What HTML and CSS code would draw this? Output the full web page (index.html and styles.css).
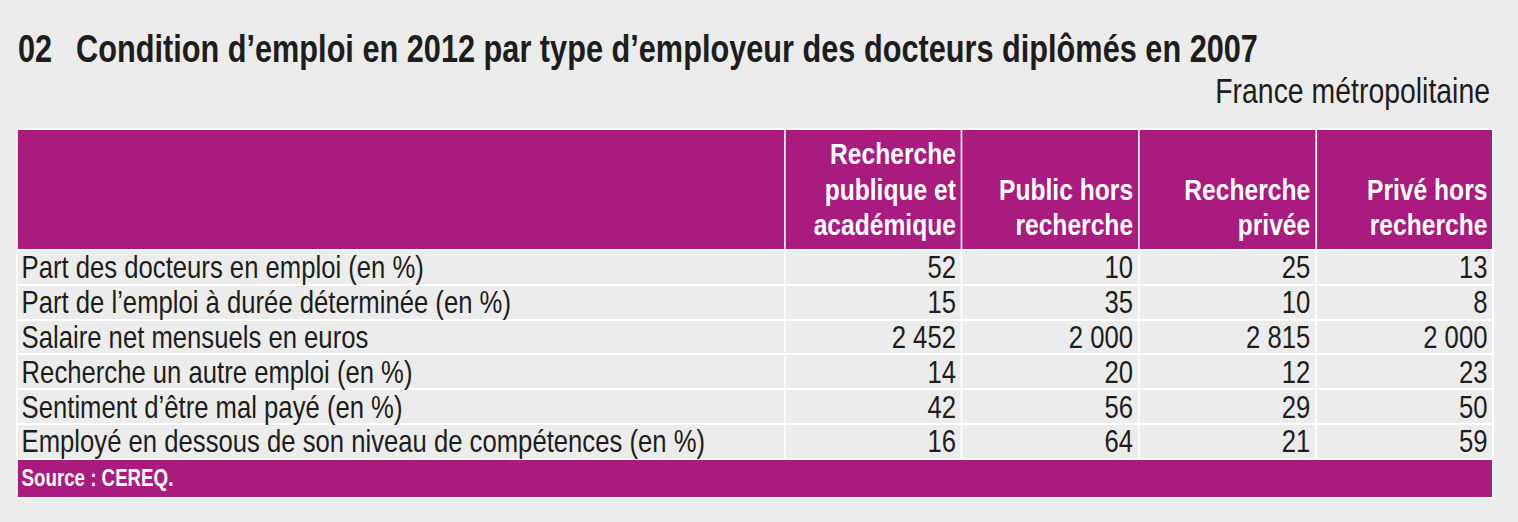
FILE: index.html
```html
<!DOCTYPE html>
<html lang="fr">
<head>
<meta charset="utf-8">
<link rel="stylesheet" href="styles.css">
</head>
<body>
<div class="page">
  <h1 class="title"><span class="num">02</span>Condition d’emploi en 2012 par type d’employeur des docteurs diplômés en 2007</h1>
  <div class="scope">France métropolitaine</div>
  <table class="data">
    <colgroup>
      <col class="c-label">
      <col class="c-val">
      <col class="c-val">
      <col class="c-val">
      <col class="c-val">
    </colgroup>
    <thead>
      <tr>
        <th></th>
        <th>Recherche<br>publique et<br>académique</th>
        <th>Public hors<br>recherche</th>
        <th>Recherche<br>privée</th>
        <th>Privé hors<br>recherche</th>
      </tr>
    </thead>
    <tbody>
      <tr><td>Part des docteurs en emploi (en %)</td><td>52</td><td>10</td><td>25</td><td>13</td></tr>
      <tr><td>Part de l’emploi à durée déterminée (en %)</td><td>15</td><td>35</td><td>10</td><td>8</td></tr>
      <tr><td>Salaire net mensuels en euros</td><td>2 452</td><td>2 000</td><td>2 815</td><td>2 000</td></tr>
      <tr><td>Recherche un autre emploi (en %)</td><td>14</td><td>20</td><td>12</td><td>23</td></tr>
      <tr><td>Sentiment d’être mal payé (en %)</td><td>42</td><td>56</td><td>29</td><td>50</td></tr>
      <tr><td>Employé en dessous de son niveau de compétences (en %)</td><td>16</td><td>64</td><td>21</td><td>59</td></tr>
    </tbody>
    <tfoot>
      <tr><td colspan="5">Source : CEREQ.</td></tr>
    </tfoot>
  </table>
</div>
</body>
</html>
```
FILE: styles.css
```css
html, body {
  margin: 0;
  padding: 0;
  background: #ececec;
  overflow: hidden;
}
/* Helvetica Condensed look: Arial-metric font narrowed horizontally */
.page {
  width: 1824.7px;
  padding: 0 0 0 19.75px;
  font-family: "Liberation Sans", Arial, sans-serif;
  color: #1d1d1b;
  transform: scaleX(0.81);
  transform-origin: 0 0;
}
.title {
  margin: 0;
  padding: 27px 0 0 2.5px;
  font-size: 37.9px;
  line-height: 44px;
  font-weight: bold;
  white-space: nowrap;
}
.title .num {
  display: inline-block;
  width: 71.6px;
}
.scope {
  text-align: right;
  font-size: 35.1px;
  line-height: 40px;
  padding-right: 4.9px;
}
.data {
  margin-top: 17px;
  width: 1824.7px;
  border-collapse: separate;
  border-spacing: 2.47px 2px;
  background: #ffffff;
  table-layout: fixed;
}
.c-label { width: 944.4px; }
.c-val { width: 216.4px; }
.data th {
  background: #a91b7f;
  color: #ffffff;
  font-weight: bold;
  font-size: 30.4px;
  line-height: 35.5px;
  height: 119px;
  padding: 0 6.1px 6.5px 6.1px;
  box-sizing: border-box;
  text-align: right;
  vertical-align: bottom;
}
.data tbody td {
  background: #ececec;
  font-size: 31.7px;
  line-height: 29.8px;
  height: 32.8px;
  padding: 2.4px 6.1px 0 4.9px;
  box-sizing: border-box;
  text-align: right;
  vertical-align: top;
  white-space: nowrap;
}
.data tbody td:first-child {
  text-align: left;
}
.data tfoot td {
  background: #a91b7f;
  color: #ffffff;
  font-weight: bold;
  font-size: 23.1px;
  line-height: 25px;
  height: 37px;
  padding: 6.2px 4.9px 5.8px;
  box-sizing: border-box;
  vertical-align: top;
}
```
